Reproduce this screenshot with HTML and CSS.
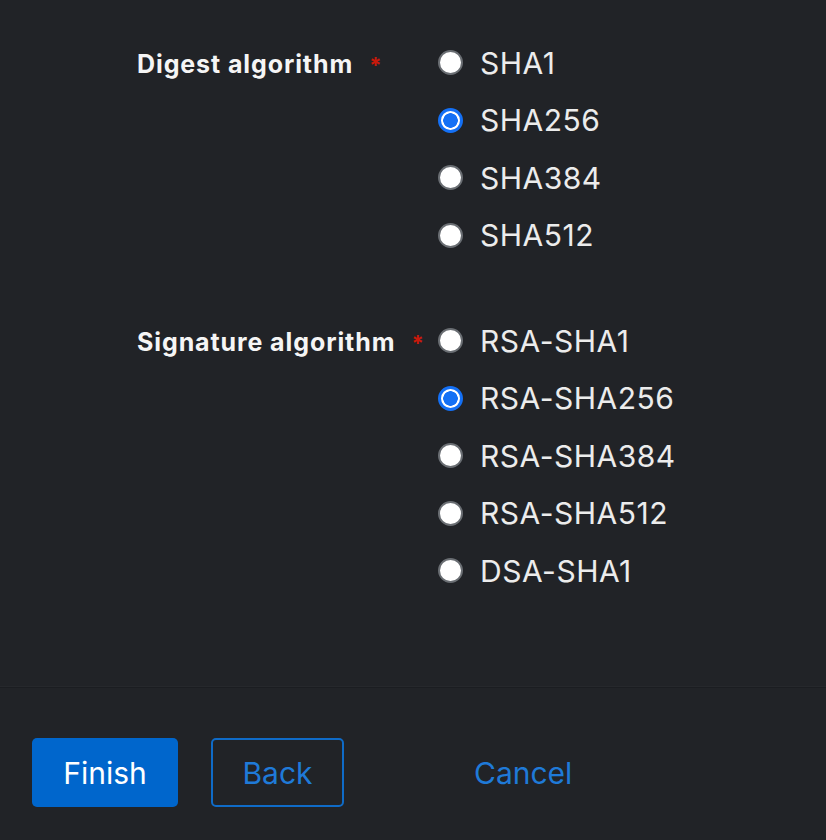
FILE: index.html
```html
<!DOCTYPE html>
<html>
<head>
<meta charset="utf-8">
<link rel="stylesheet" href="styles.css">
</head>
<body>
<div class="page">
  <form class="form">
    <div class="group">
      <div class="label">Digest algorithm<span class="req">*</span></div>
      <div class="options">
        <label class="radio"><span class="dot"></span><span class="text">SHA1</span></label>
        <label class="radio"><span class="dot checked"></span><span class="text">SHA256</span></label>
        <label class="radio"><span class="dot"></span><span class="text">SHA384</span></label>
        <label class="radio"><span class="dot"></span><span class="text">SHA512</span></label>
      </div>
    </div>
    <div class="group">
      <div class="label">Signature algorithm<span class="req">*</span></div>
      <div class="options">
        <label class="radio"><span class="dot"></span><span class="text">RSA-SHA1</span></label>
        <label class="radio"><span class="dot checked"></span><span class="text">RSA-SHA256</span></label>
        <label class="radio"><span class="dot"></span><span class="text">RSA-SHA384</span></label>
        <label class="radio"><span class="dot"></span><span class="text">RSA-SHA512</span></label>
        <label class="radio"><span class="dot"></span><span class="text">DSA-SHA1</span></label>
      </div>
    </div>
  </form>
  <footer class="footer">
    <button class="btn primary">Finish</button>
    <button class="btn secondary">Back</button>
    <button class="btn link">Cancel</button>
  </footer>
</div>
</body>
</html>
```

FILE: styles.css
```css
html, body {
  margin: 0;
  padding: 0;
  background: #212327;
}
body {
  font-family: "Inter", "Open Sans", sans-serif;
  color: #f0f0f0;
}
.page {
  width: 826px;
  height: 840px;
  display: flex;
  flex-direction: column;
}
.form {
  flex: 1;
  padding: 34px 0 0 137px;
  display: flex;
  flex-direction: column;
  gap: 48px;
}
.group {
  display: grid;
  grid-template-columns: 301px 1fr;
}
.label {
  font-weight: 700;
  font-size: 25px;
  letter-spacing: 0.9px;
  line-height: 57px;
  height: 57px;
  padding-top: 2px;
  color: #f5f5f5;
}
.req {
  color: #c9190b;
  margin-left: 16px;
  font-size: 22px;
  font-weight: 700;
}
.options {
  display: flex;
  flex-direction: column;
}
.radio {
  display: flex;
  align-items: center;
  height: 57.5px;
  gap: 17px;
}
.dot {
  width: 25px;
  height: 25px;
  box-sizing: border-box;
  border-radius: 50%;
  background: #ffffff;
  border: 2px solid #6a6e73;
  flex: none;
}
.dot.checked {
  border: 3px solid #1470f5;
  background: radial-gradient(circle, #1470f5 0 7px, #ffffff 7.5px);
}
.text {
  font-size: 30px;
  letter-spacing: 0.5px;
  color: #ececec;
}
.footer {
  height: 153px;
  box-sizing: border-box;
  border-top: 1px solid #1b1d21;
  box-shadow: 0 -1px 0 #26282c;
  display: flex;
  align-items: flex-start;
  padding: 50px 0 0 32px;
  gap: 33px;
}
.btn {
  font-family: inherit;
  font-size: 30px;
  height: 69px;
  border-radius: 5px;
  padding: 0 29px;
  cursor: pointer;
  box-sizing: border-box;
}
.primary {
  background: #0066cc;
  color: #ffffff;
  border: none;
  width: 146px;
}
.secondary {
  background: transparent;
  color: #1f7ad8;
  border: 2px solid #0f6bc7;
  width: 133px;
}
.link {
  background: transparent;
  color: #1f7ad8;
  border: none;
  margin-left: 68px;
}
```
